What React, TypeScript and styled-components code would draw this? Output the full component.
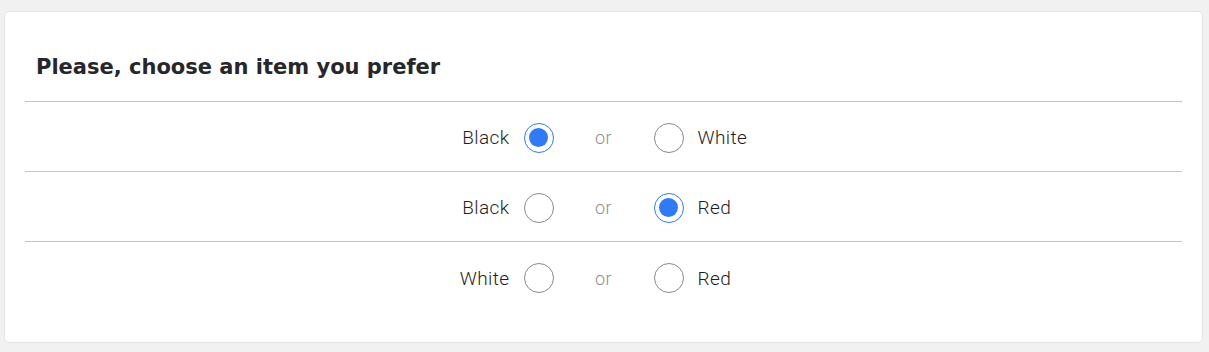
import React, { useState } from "react";
import styled, { createGlobalStyle } from "styled-components";

const Global = createGlobalStyle`
  html, body { margin: 0; padding: 0; background: #f1f1f1; }
  body { font-family: "Roboto", "Inter", "Liberation Sans", sans-serif; }
  * { box-sizing: border-box; }
`;

const Page = styled.div`
  padding: 11px 6px 10px 4px;
`;

const Card = styled.div`
  background: #fff;
  border: 1px solid #e4e4e4;
  border-radius: 5px;
  padding: 0 20px 30px 20px;
`;

const Title = styled.h2`
  margin: 0;
  height: 90px;
  display: flex;
  align-items: center;
  padding: 20px 0 0 11px;
  font-family: "DejaVu Sans", "Inter", sans-serif;
  font-size: 21px;
  font-weight: 700;
  color: #26272b;
  letter-spacing: 0px;
  border-bottom: 1px solid #c4c4c4;
`;

const Row = styled.div<{ $last?: boolean }>`
  height: 70px;
  padding-top: 2px;
  display: grid;
  grid-template-columns: 1fr 100px 1fr;
  align-items: center;
  border-bottom: ${(p) => (p.$last ? "none" : "1px solid #c4c4c4")};
`;

const Side = styled.label<{ $align: "left" | "right" }>`
  display: flex;
  align-items: center;
  gap: 14px;
  justify-content: ${(p) => (p.$align === "right" ? "flex-end" : "flex-start")};
  font-size: 19px;
  font-weight: 300;
  letter-spacing: 0.4px;
  color: #1e1e1e;
  cursor: pointer;
`;

const Or = styled.span`
  text-align: center;
  font-size: 18px;
  font-weight: 300;
  letter-spacing: 0.5px;
  color: #8f8f8f;
`;

const Radio = styled.span<{ $checked: boolean }>`
  width: 30px;
  height: 30px;
  border-radius: 50%;
  border: 1.5px solid ${(p) => (p.$checked ? "#2f7bf6" : "#8a8a8a")};
  display: flex;
  align-items: center;
  justify-content: center;
  flex-shrink: 0;
  &::after {
    content: "";
    width: 19px;
    height: 19px;
    border-radius: 50%;
    background: #2f7bf6;
    display: ${(p) => (p.$checked ? "block" : "none")};
  }
`;

type Pair = { a: string; b: string };
const pairs: Pair[] = [
  { a: "Black", b: "White" },
  { a: "Black", b: "Red" },
  { a: "White", b: "Red" },
];

export default function App() {
  const [sel, setSel] = useState<(0 | 1 | null)[]>([0, 1, null]);
  const pick = (i: number, v: 0 | 1) =>
    setSel((s) => s.map((x, j) => (j === i ? v : x)));
  return (
    <>
      <Global />
      <Page>
        <Card>
          <Title>Please, choose an item you prefer</Title>
          {pairs.map((p, i) => (
            <Row key={i} $last={i === pairs.length - 1}>
              <Side $align="right" onClick={() => pick(i, 0)}>
                {p.a}
                <Radio $checked={sel[i] === 0} />
              </Side>
              <Or>or</Or>
              <Side $align="left" onClick={() => pick(i, 1)}>
                <Radio $checked={sel[i] === 1} />
                {p.b}
              </Side>
            </Row>
          ))}
        </Card>
      </Page>
    </>
  );
}
